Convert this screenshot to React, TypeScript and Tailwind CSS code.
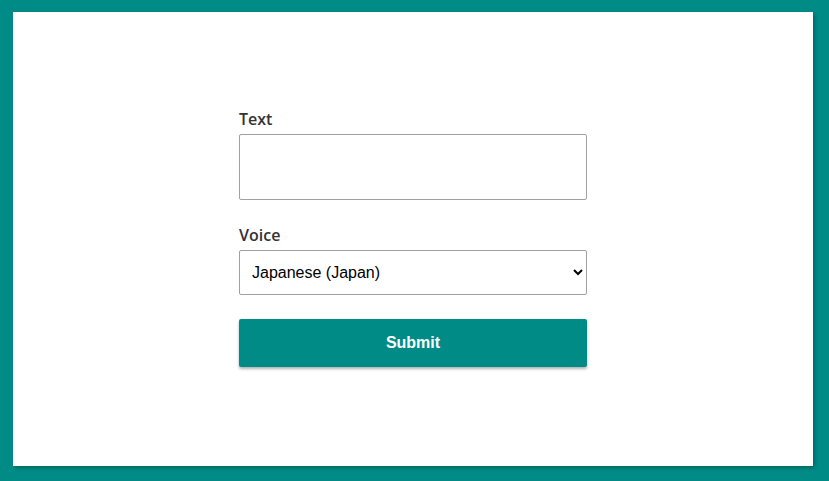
export default function App() {
  return (
    <div className="min-h-[481px] w-[829px] bg-[#008b87] pt-[12px] pl-[13px]">
      <div className="flex h-[454px] w-[800px] flex-col items-center bg-white pt-[96px] shadow-[2px_2px_4px_rgba(0,0,0,0.25)]">
        <form className="flex w-[348px] flex-col" onSubmit={(e) => e.preventDefault()}>
          <label
            htmlFor="text"
            className="mb-[4px] block text-[16px] font-semibold leading-[22px] text-[#333]"
            style={{ fontFamily: '"Open Sans", sans-serif' }}
          >
            Text
          </label>
          <textarea
            id="text"
            className="block h-[66px] w-full resize-none rounded-[2px] border border-[#a0a0a0] bg-white outline-none"
          />
          <label
            htmlFor="voice"
            className="mt-[24px] mb-[4px] block text-[16px] font-semibold leading-[22px] text-[#333]"
            style={{ fontFamily: '"Open Sans", sans-serif' }}
          >
            Voice
          </label>
          <select
            id="voice"
            defaultValue="ja-JP"
            className="block h-[45px] w-full rounded-[2px] border border-[#a0a0a0] bg-white pl-[8px] pr-[4px] text-[16px] text-black"
            style={{ fontFamily: '"Liberation Sans", Arial, sans-serif' }}
          >
            <option value="ja-JP">Japanese (Japan)</option>
            <option value="en-US">English (United States)</option>
          </select>
          <button
            type="submit"
            className="mt-[24px] h-[48px] w-full rounded-[2px] bg-[#008b87] text-[16px] font-bold text-white shadow-[0_2px_3px_rgba(0,0,0,0.3)]"
            style={{ fontFamily: '"Liberation Sans", Arial, sans-serif' }}
          >
            Submit
          </button>
        </form>
      </div>
    </div>
  );
}
